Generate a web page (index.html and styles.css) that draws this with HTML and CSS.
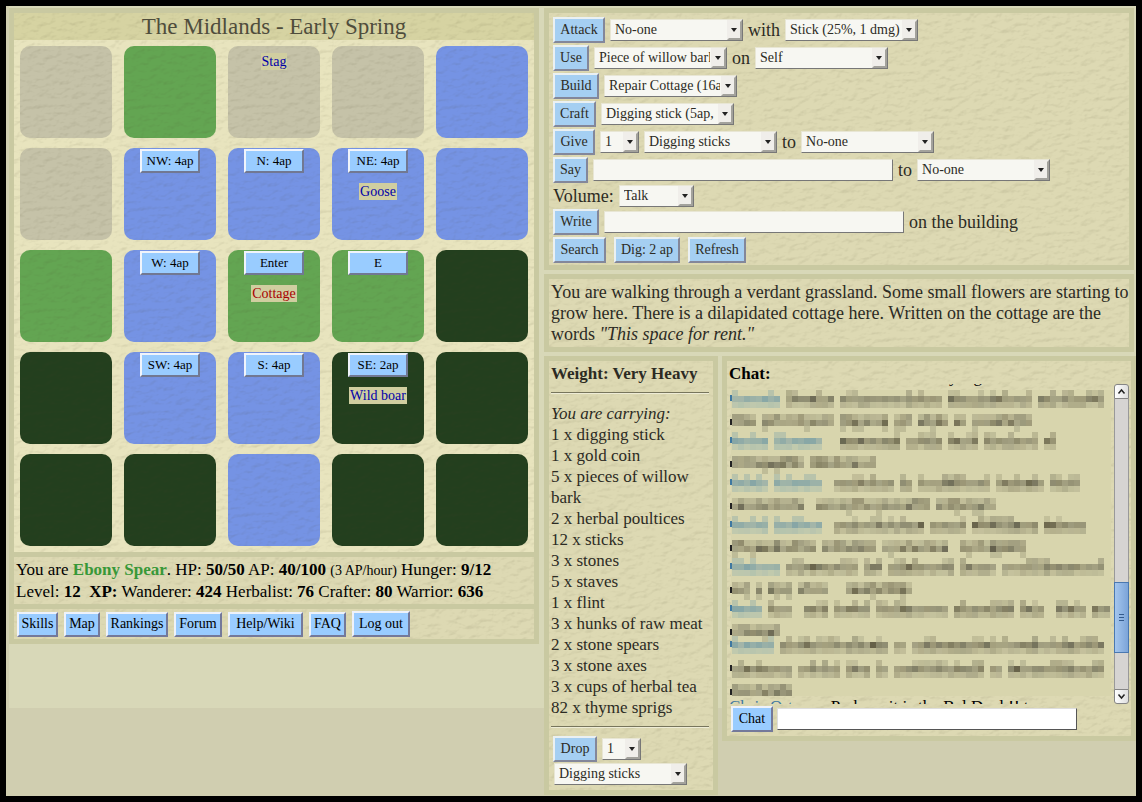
FILE: index.html
```html
<!DOCTYPE html>
<html lang="en">
<head>
<meta charset="utf-8">
<title>The Midlands</title>
<link rel="stylesheet" href="styles.css">
</head>
<body>
<div class="page">
  <main class="left frame">
    <h1 class="title paper">The Midlands - Early Spring</h1>
    <div class="map paper">
      <div class="tile rock"></div>
      <div class="tile grass"></div>
      <div class="tile rock"><a class="label first" href="#">Stag</a></div>
      <div class="tile rock"></div>
      <div class="tile water"></div>

      <div class="tile rock"></div>
      <div class="tile water"><button class="move">NW: 4ap</button></div>
      <div class="tile water"><button class="move">N: 4ap</button></div>
      <div class="tile water"><button class="move">NE: 4ap</button><a class="label" href="#">Goose</a></div>
      <div class="tile water"></div>

      <div class="tile grass"></div>
      <div class="tile water"><button class="move">W: 4ap</button></div>
      <div class="tile grass"><button class="move">Enter</button><span class="label place">Cottage</span></div>
      <div class="tile grass"><button class="move">E</button></div>
      <div class="tile forest"></div>

      <div class="tile forest"></div>
      <div class="tile water"><button class="move">SW: 4ap</button></div>
      <div class="tile water"><button class="move">S: 4ap</button></div>
      <div class="tile forest"><button class="move">SE: 2ap</button><a class="label" href="#">Wild boar</a></div>
      <div class="tile forest"></div>

      <div class="tile forest"></div>
      <div class="tile forest"></div>
      <div class="tile water"></div>
      <div class="tile forest"></div>
      <div class="tile forest"></div>
    </div>
    <div class="stats paper">
      <div>You are <b class="name">Ebony Spear</b>. HP: <b>50/50</b> AP: <b>40/100</b> <small>(3 AP/hour)</small> Hunger: <b>9/12</b></div>
      <div>Level: <b>12</b> &nbsp;<b>XP:</b> Wanderer: <b>424</b> Herbalist: <b>76</b> Crafter: <b>80</b> Warrior: <b>636</b></div>
    </div>
    <nav class="nav paper">
      <a class="btn w41" href="#">Skills</a>
      <a class="btn w36" href="#">Map</a>
      <a class="btn w62" href="#">Rankings</a>
      <a class="btn w48" href="#">Forum</a>
      <a class="btn w75" href="#">Help/Wiki</a>
      <a class="btn w37" href="#">FAQ</a>
      <button class="btn w58">Log out</button>
    </nav>
  </main>

  <div class="right">
    <section class="frame">
      <div class="actions paper soft">
        <div class="row"><button class="btn w52">Attack</button><select class="pick" aria-label="Target"><option>No-one</option></select><span>with</span><select class="pick" aria-label="Weapon"><option>Stick (25%, 1 dmg)</option></select></div>
        <div class="row"><button class="btn w36">Use</button><select class="pick" aria-label="Item to use"><option>Piece of willow bark</option></select><span>on</span><select class="pick" aria-label="Use on"><option>Self</option></select></div>
        <div class="row"><button class="btn w46">Build</button><select class="pick" aria-label="Building"><option>Repair Cottage (16ap)</option></select></div>
        <div class="row"><button class="btn w43">Craft</button><select class="pick" aria-label="Item to craft"><option>Digging stick (5ap, 1 stick)</option></select></div>
        <div class="row"><button class="btn w42">Give</button><select class="pick count" aria-label="Amount to give"><option>1</option></select><select class="pick" aria-label="Item to give"><option>Digging sticks</option></select><span>to</span><select class="pick" aria-label="Give to"><option>No-one</option></select></div>
        <div class="row"><button class="btn w35">Say</button><input class="text" type="text" aria-label="Say"><span>to</span><select class="pick" aria-label="Say to"><option>No-one</option></select></div>
        <div class="row low"><label for="volume">Volume:</label><select class="pick volume" id="volume"><option>Talk</option></select></div>
        <div class="row"><button class="btn w46">Write</button><input class="text" id="write" type="text"><label for="write">on the building</label></div>
        <div class="row wide"><button class="btn w53">Search</button><button class="btn w66">Dig: 2 ap</button><button class="btn w58">Refresh</button></div>
      </div>
    </section>

    <section class="frame">
      <p class="scene paper soft">You are walking through a verdant grassland. Some small flowers are starting to grow here. There is a dilapidated cottage here. Written on the cottage are the words <i>"This space for rent."</i></p>
    </section>

    <div class="lower">
      <section class="frame">
        <div class="bag paper soft">
          <b>Weight: Very Heavy</b>
          <hr>
          <i>You are carrying:</i>
          <ul>
            <li>1 x digging stick</li>
            <li>1 x gold coin</li>
            <li>5 x pieces of willow bark</li>
            <li>2 x herbal poultices</li>
            <li>12 x sticks</li>
            <li>3 x stones</li>
            <li>5 x staves</li>
            <li>1 x flint</li>
            <li>3 x hunks of raw meat</li>
            <li>2 x stone spears</li>
            <li>3 x stone axes</li>
            <li>3 x cups of herbal tea</li>
            <li>82 x thyme sprigs</li>
          </ul>
          <hr>
          <div class="drop">
            <div class="row"><button class="btn w44">Drop</button><select class="pick count" aria-label="Amount to drop"><option>1</option></select></div>
            <select class="pick" aria-label="Item to drop"><option>Digging sticks</option></select>
          </div>
        </div>
      </section>

      <section class="frame">
        <div class="chat paper">
          <b>Chat:</b>
          <div class="chat-box">
            <div class="log">
              <div class="cut-top"><span>y</span><span>g</span></div>
              <svg class="mosaic" id="mosaic" viewBox="0 0 384 312" aria-hidden="true"></svg>
              <div class="cut-bottom"><span class="who">Chris Ort</span><span>Perhaps it is the Bel Dual !! t</span></div>
            </div>
            <div class="bar" aria-hidden="true">
              <svg class="cap up" viewBox="0 0 13 13"><path d="M3.500 8.500 L6.500 5 L9.500 8.500" fill="none" stroke="#222" stroke-width="1.500"/></svg>
              <div class="track"><div class="thumb"><i></i><i></i><i></i></div></div>
              <svg class="cap down" viewBox="0 0 13 13"><path d="M3.500 4.500 L6.500 8 L9.500 4.500" fill="none" stroke="#222" stroke-width="1.500"/></svg>
            </div>
          </div>
          <div class="row say"><button class="btn w42">Chat</button><input class="text" type="text" aria-label="Chat"></div>
        </div>
      </section>
    </div>
  </div>
</div>
<script src="mosaic.js"></script>
</body>
</html>
```

FILE: mosaic.js
```js
// Censored chat lines: y of the line, kind of name, then [start, end] word cells.
const CELL = 6;
const LINES = [
  [6, 1, [[0, 8]], [[9, 17], [18, 35], [36, 50], [51, 62]]],
  [30, 0, [], [[0, 4], [5, 17], [18, 26], [27, 30], [31, 36], [37, 39], [40, 50]]],
  [48, 1, [[0, 6], [7, 15]], [[18, 28], [29, 35], [36, 41], [42, 51], [52, 54]]],
  [72, 0, [], [[0, 12], [13, 24]]],
  [90, 1, [[0, 6], [7, 15]], [[17, 27], [28, 30], [31, 43], [44, 52], [53, 58]]],
  [114, 0, [], [[0, 12], [14, 33], [34, 44]]],
  [132, 1, [[0, 6], [7, 15]], [[17, 32], [33, 39], [40, 51], [52, 59]]],
  [156, 0, [], [[0, 14], [15, 24], [25, 36], [38, 49]]],
  [174, 1, [[0, 8]], [[9, 21], [22, 25], [26, 37], [38, 44], [45, 62]]],
  [198, 0, [], [[0, 3], [4, 5], [6, 10], [11, 16], [19, 30]]],
  [216, 1, [[0, 5]], [[6, 10], [12, 16], [17, 23], [24, 36], [37, 47], [48, 52], [54, 59], [60, 63]]],
  [240, 0, [], [[0, 8]]],
  [252, 1, [[0, 7]], [[8, 26], [27, 29], [30, 62]]],
  [276, 1, [], [[0, 10], [11, 18], [19, 23], [24, 26], [27, 42], [43, 45], [46, 62]]],
  [300, 0, [], [[0, 10]]]
];
let seed = 11;
const rand = () => (seed = (seed * 16807) % 2147483647) / 2147483647;
let out = '<rect x="2" y="6" width="380" height="306" fill="#d8d5ad"/>';
function cell(col, y, color, alpha) {
  out += `<rect x="${3 + col * CELL}" y="${y}" width="6" height="6" fill="${color}" opacity="${alpha.toFixed(2)}"/>`;
}
for (const [y, named, names, words] of LINES) {
  out += `<rect x="1" y="${y + 5}" width="2" height="6" fill="${names.length ? '#3f78a0' : '#222'}"/>`;
  for (const [a, b] of names) {
    for (let c = a; c < b; c++) {
      if (c === a || rand() < .25) cell(c, y, '#7fa3a8', .35);
      cell(c, y + 6, '#6f98a4', .5 + rand() * .3);
      cell(c, y + 12, '#8fb0ae', .3 + rand() * .2);
    }
  }
  for (const [a, b] of words) {
    for (let c = a; c < b; c++) {
      const color = rand() < .5 ? '#5f5a42' : '#5a5846';
      if (named) {
        if (rand() < .4) cell(c, y, color, .15 + rand() * .2);
        cell(c, y + 6, color, .4 + rand() * rand() * .6);
        cell(c, y + 12, color, .15 + rand() * .2);
      } else {
        cell(c, y, color, .18 + rand() * rand() * .5);
        cell(c, y + 6, color, .35 + rand() * rand() * .6);
        if (rand() < .15 && y < 300) cell(c, y + 12, color, .2);
      }
    }
  }
}
document.getElementById('mosaic').innerHTML = out;
```

FILE: styles.css
```css
* { box-sizing: border-box; }

:root {
  --texture: url("data:image/svg+xml,%3Csvg xmlns='http://www.w3.org/2000/svg' width='160' height='160'%3E%3Cfilter id='f' x='0' y='0' width='100%25' height='100%25' color-interpolation-filters='sRGB'%3E%3CfeTurbulence type='fractalNoise' baseFrequency='.1 .16' numOctaves='3' seed='4' stitchTiles='stitch'/%3E%3CfeDiffuseLighting surfaceScale='1' diffuseConstant='1'%3E%3CfeDistantLight azimuth='240' elevation='60'/%3E%3C/feDiffuseLighting%3E%3CfeColorMatrix values='0 0 0 0 .28 0 0 0 0 .26 0 0 0 0 .15 -.55 0 0 0 .48'/%3E%3C/filter%3E%3Crect width='160' height='160' filter='url(%23f)'/%3E%3C/svg%3E");
}

body {
  margin: 0;
  padding: 6px;
  min-height: 100vh;
  display: flex;
  background: #000;
  color: #000;
  font: 17px/21px "Palatino Linotype", "URW Palladio L", "Liberation Serif", serif;
}

.page {
  flex: 1;
  display: grid;
  grid-template-columns: 53fr 59fr;
  column-gap: 5px;
  align-items: start;
  padding: 2px 2px 1px 3px;
  background: linear-gradient(#d8d8b8, #d8d8b8) 3px 0 / 100% 702px no-repeat #d0ceb0;
}

.frame { padding: 5px; background: #c9c9a1; }
.paper { background: var(--texture) #ddd9b3; }
.soft { color: #2c2b24; }

.left { display: grid; gap: 5px; }
.title {
  margin: 0 0 -5px;
  background-color: #d6d3a2;
  color: #4f4d3c;
  font-size: 23px;
  font-weight: normal;
  line-height: 27px;
  text-align: center;
}
.map {
  display: grid;
  grid-template-columns: repeat(5, 1fr);
  gap: 10px 12px;
  padding: 6px;
  background-color: #e8e4be;
}
.tile {
  height: 92px;
  border-radius: 10px;
  display: flex;
  flex-direction: column;
  align-items: center;
  padding-top: 1px;
  background-image: var(--texture);
}
.rock { background-color: #c5c2a8; }
.grass { background-color: #63a552; }
.water { background-color: #7593e4; }
.forest { background-color: #233f1e; }

.move {
  width: 60px;
  height: 24px;
  padding: 0;
  border: 2px solid;
  border-color: #f0f4fb #717892 #717892 #f0f4fb;
  background: #99ccff;
  color: #000;
  font: 13px/18px "Palatino Linotype", "URW Palladio L", "Liberation Serif", serif;
}
.label {
  margin-top: 10px;
  padding: 0 1px;
  background: #d0cea0;
  color: #0000a8;
  font-size: 14px;
  line-height: 17px;
  text-decoration: none;
}
.first { margin-top: 6px; }
.place { color: #a80000; }

.stats { padding: 2px; white-space: nowrap; }
.stats small { font-size: 14px; }
.name { color: #389838; }

.nav { display: flex; align-items: center; gap: 6px; padding: 2px 3px; }

.btn {
  flex: none;
  height: 26px;
  padding: 0;
  border: 2px solid;
  border-color: #eef2fa #74799a #74799a #eef2fa;
  background: #99ccff;
  color: #000;
  font: 14px/22px "Palatino Linotype", "URW Palladio L", "Liberation Serif", serif;
  text-align: center;
  text-decoration: none;
  white-space: nowrap;
}
.nav a { height: 25px; line-height: 20px; }
.soft .btn {
  border-color: #eaf0f2 #83879a #83879a #eaf0f2;
  background: #a5cff2;
  color: #2c2b24;
}
.w35 { width: 35px; }
.w36 { width: 36px; }
.w37 { width: 37px; }
.w41 { width: 41px; }
.w42 { width: 42px; }
.w43 { width: 43px; }
.w44 { width: 44px; }
.w46 { width: 46px; }
.w48 { width: 48px; }
.w52 { width: 52px; }
.w53 { width: 53px; }
.w58 { width: 58px; }
.w62 { width: 62px; }
.w66 { width: 66px; }
.w75 { width: 75px; }

.right { display: grid; gap: 4px; min-width: 0; }
.actions { display: grid; gap: 2px; padding: 4px 4px 2px; font-size: 18px; }
.row { display: flex; align-items: center; gap: 5px; min-height: 26px; }
.low { min-height: 22px; }
.wide { gap: 8px; }

.pick {
  appearance: none;
  width: 133px;
  height: 22px;
  padding: 0 16px 0 4px;
  border: 1px solid;
  border-color: #e8e6d4 #777 #777 #e8e6d4;
  border-radius: 0;
  background: url("data:image/svg+xml,%3Csvg xmlns='http://www.w3.org/2000/svg' width='15' height='20'%3E%3Cpath d='M0 0H15V20H0z' fill='%23f0eeea'/%3E%3Cpath d='M15 0V20H0L2 18H13V2z' fill='%23a3a29c'/%3E%3Cpath d='M4 8H10L7 12z' fill='%23222'/%3E%3C/svg%3E") right center no-repeat #f7f7f2;
  color: #2c2b24;
  font: 14px/20px "Palatino Linotype", "URW Palladio L", "Liberation Serif", serif;
  text-overflow: clip;
}
.count { width: 39px; }
.volume { width: 75px; }
.text {
  width: 300px;
  height: 22px;
  border: 1px solid;
  border-color: #e8e6d4 #777 #777 #e8e6d4;
  background: #f7f7f2;
  font: 14px/20px "Liberation Serif", serif;
}

.scene { margin: 0; padding: 3px 0 2px 2px; font-size: 18px; }

.lower {
  display: grid;
  grid-template-columns: 174fr 414fr;
  gap: 4px;
  align-items: start;
  margin-right: -2px;
}
.bag { padding: 2px 2px 5px; }
.bag b, .bag > i, .chat > b { display: block; }
.bag hr {
  height: 2px;
  margin: 8px 2px 9px 0;
  border: 0;
  border-top: 1px solid #77755c;
  background: #eeecd6;
}
.bag ul + hr { margin-bottom: 8px; }
.bag ul { margin: 0; padding: 0; list-style: none; }
.drop { padding-left: 2px; }
.drop > .pick { display: block; margin: 1px 0 0 1px; }

.chat { padding: 2px 2px 4px; }
.chat-box { display: flex; height: 320px; }
.log { flex: 1; min-width: 0; overflow: hidden; display: flex; flex-direction: column; }
.mosaic { flex: none; width: 384px; height: 312px; margin-top: -3px; }
.cut-top {
  display: flex;
  flex: none;
  gap: 16px;
  height: 3px;
  padding-left: 220px;
  overflow: hidden;
  align-items: flex-end;
}
.cut-bottom { display: flex; flex: none; gap: 38px; height: 8px; overflow: hidden; white-space: nowrap; }
.who { color: #3f78a0; }

.bar { flex: none; width: 15px; display: flex; flex-direction: column; }
.cap { flex: none; height: 15px; border: 1px solid #858585; background: linear-gradient(90deg, #fff, #dedede); }
.up { border-radius: 3px 3px 0 0; }
.down { border-radius: 0 0 3px 3px; }
.track {
  flex: 1;
  display: flex;
  flex-direction: column;
  border: solid #999;
  border-width: 0 1px;
  background: #d6d4d2;
}
.track::before { content: ""; flex: 184; }
.track::after { content: ""; flex: 36; }
.thumb {
  flex: 70;
  margin: 0 -1px;
  display: flex;
  flex-direction: column;
  align-items: center;
  justify-content: center;
  gap: 2px;
  border: 1px solid #4a78b0;
  background: linear-gradient(90deg, #a4c6ee, #7ca4d8);
}
.thumb i { width: 5px; height: 1px; background: #345a8c; }
.say { gap: 4px; padding: 2px 0 0 2px; }
.say .text { border-color: #ddd #555 #555 #ddd; background: #fff; }
```
